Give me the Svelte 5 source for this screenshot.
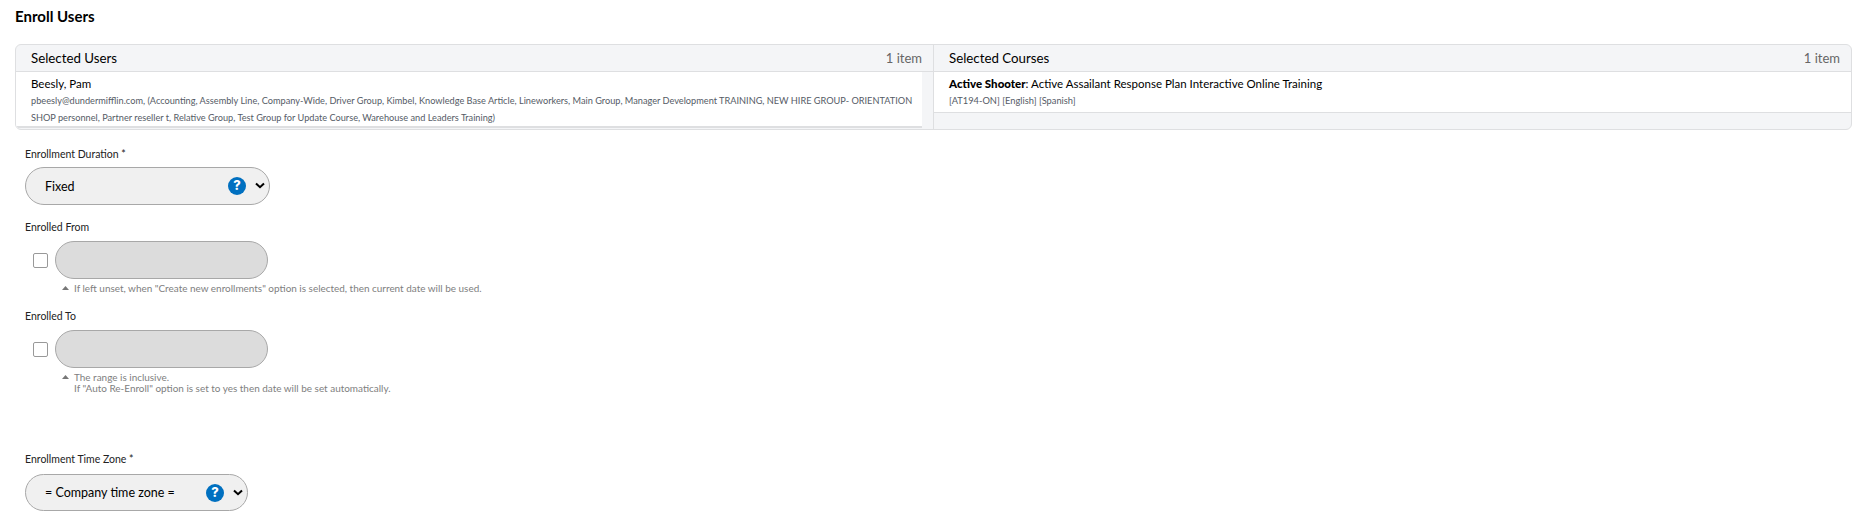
<script>
	const userGroups =
		'pbeesly@dundermifflin.com, (Accounting, Assembly Line, Company-Wide, Driver Group, Kimbel, Knowledge Base Article, Lineworkers, Main Group, Manager Development TRAINING, NEW HIRE GROUP- ORIENTATION SHOP personnel, Partner reseller t, Relative Group, Test Group for Update Course, Warehouse and Leaders Training)'
</script>

{#snippet help()}
	<svg class="help" viewBox="0 0 18 18" width="18" height="18" aria-hidden="true">
		<circle cx="9" cy="9" r="9" fill="#0070c0" />
		<text x="9" y="13.4" text-anchor="middle" class="help-mark">?</text>
	</svg>
{/snippet}

{#snippet chevron()}
	<svg class="chevron" viewBox="0 0 10 7" width="10" height="7" aria-hidden="true">
		<path d="M1 1.4 5 5.2 9 1.4" fill="none" stroke="#000" stroke-width="2" />
	</svg>
{/snippet}

{#snippet hintCaret()}
	<svg class="caret" viewBox="0 0 7 4" width="7" height="4" aria-hidden="true">
		<path d="M3.5 0 7 4H0z" fill="#777" />
	</svg>
{/snippet}

<main class="page">
	<h1>Enroll Users</h1>

	<section class="panel">
		<div class="col col-users">
			<header>
				<span>Selected Users</span>
				<span class="count">1 item</span>
			</header>
			<div class="body-users">
				<div class="user">
					<div class="name">Beesly, Pam</div>
					<div class="groups">{userGroups}</div>
				</div>
			</div>
		</div>
		<div class="col col-courses">
			<header>
				<span>Selected Courses</span>
				<span class="count">1 item</span>
			</header>
			<div class="course">
				<div class="name"><b>Active Shooter</b>: Active Assailant Response Plan Interactive Online Training</div>
				<div class="code">[AT194-ON] [English] [Spanish]</div>
			</div>
		</div>
	</section>

	<form class="fields">
		<div class="field duration">
			<div class="label">Enrollment Duration *</div>
			<div class="select select-wide">
				<span>Fixed</span>
				{@render help()}
				{@render chevron()}
			</div>
		</div>

		<div class="field from">
			<div class="label">Enrolled From</div>
			<div class="date-row">
				<span class="check"></span>
				<span class="date"></span>
			</div>
			<div class="hint">
				{@render hintCaret()}
				<p>If left unset, when "Create new enrollments" option is selected, then current date will be used.</p>
			</div>
		</div>

		<div class="field to">
			<div class="label">Enrolled To</div>
			<div class="date-row">
				<span class="check"></span>
				<span class="date"></span>
			</div>
			<div class="hint">
				{@render hintCaret()}
				<p>The range is inclusive.<br />If "Auto Re-Enroll" option is set to yes then date will be set automatically.</p>
			</div>
		</div>

		<div class="field zone">
			<div class="label">Enrollment Time Zone *</div>
			<div class="select select-narrow">
				<span>= Company time zone =</span>
				{@render help()}
				{@render chevron()}
			</div>
		</div>
	</form>
</main>

<style>
	:global(body) {
		background: #fff;
		overflow: hidden;
	}

	.page {
		height: 522px;
		box-sizing: border-box;
		padding: 7px 12px 0 15px;
		font-family: Lato, Inter, sans-serif;
		color: #000;
	}

	h1 {
		margin: 0;
		font-size: 15px;
		line-height: 18px;
		font-weight: 700;
	}

	.panel {
		display: flex;
		margin-top: 19px;
		height: 86px;
		box-sizing: border-box;
		border: 1px solid #dedfe1;
		border-radius: 6px;
		background: #f4f5f7;
		overflow: hidden;
	}

	.col {
		display: flex;
		flex-direction: column;
	}

	.col-users {
		width: 918px;
		box-sizing: border-box;
		border-right: 1px solid #dedfe1;
	}

	.col-courses {
		flex: 1;
	}

	header {
		display: flex;
		justify-content: space-between;
		align-items: center;
		height: 27px;
		flex: none;
		box-sizing: border-box;
		padding: 0 11px 0 15px;
		border-bottom: 1px solid #dedfe1;
		font-size: 13.3px;
	}

	.count {
		color: #666;
		font-size: 13px;
	}

	.body-users {
		flex: 1;
		padding-right: 11px;
	}

	.user {
		height: 56px;
		box-sizing: border-box;
		padding: 4px 0 0 15px;
		background: #fff;
		border-bottom: 2px solid #dedfe1;
	}

	.name {
		font-size: 11.5px;
		line-height: 15px;
	}

	.groups {
		margin-top: 1px;
		font-size: 9.2px;
		line-height: 17px;
		color: #555b66;
	}

	.course {
		height: 41px;
		flex: none;
		box-sizing: border-box;
		padding: 4px 15px 0;
		background: #fff;
		border-bottom: 1px solid #dedfe1;
	}

	.course b {
		font-weight: 900;
	}

	.code {
		margin-top: 2px;
		font-size: 9.3px;
		line-height: 15px;
		color: #555b66;
	}

	.fields {
		padding-left: 10px;
	}

	.field {
		display: flex;
		flex-direction: column;
		align-items: flex-start;
	}

	.duration {
		margin-top: 17px;
	}

	.from {
		margin-top: 15px;
	}

	.to {
		margin-top: 15px;
	}

	.zone {
		margin-top: 58px;
	}

	.label {
		font-size: 10.5px;
		line-height: 14px;
		color: #222;
	}

	.select {
		display: flex;
		align-items: center;
		height: 38px;
		box-sizing: border-box;
		margin-top: 6px;
		padding: 0 4px 0 19px;
		border: 1px solid #a8a8a8;
		border-radius: 19px;
		background: #f0f0f0;
		font-size: 12.5px;
	}

	.select-narrow {
		height: 37px;
		width: 223px;
		margin-top: 8px;
	}

	.select span {
		flex: 1;
	}

	.select-wide {
		width: 245px;
	}

	.help {
		margin-right: 9px;
	}

	.help-mark {
		font-family: Inter, sans-serif;
		font-size: 13px;
		font-weight: 800;
		fill: #fff;
	}

	.chevron {
		margin-top: -1px;
	}

	.date-row {
		display: flex;
		align-items: center;
		gap: 7px;
		margin-top: 7px;
		padding-left: 8px;
	}

	.check {
		width: 15px;
		height: 15px;
		box-sizing: border-box;
		border: 1px solid #999;
		border-radius: 2px;
		background: #fff;
	}

	.date {
		width: 213px;
		height: 38px;
		box-sizing: border-box;
		border: 1px solid #a8a8a8;
		border-radius: 19px;
		background: #dcdcdc;
	}

	.hint {
		display: flex;
		align-items: flex-start;
		gap: 5px;
		margin-top: 4px;
		padding-left: 37px;
		font-size: 9.95px;
		line-height: 11px;
		color: #808080;
	}

	.hint p {
		margin: 0;
	}

	.caret {
		margin-top: 3px;
	}
</style>
